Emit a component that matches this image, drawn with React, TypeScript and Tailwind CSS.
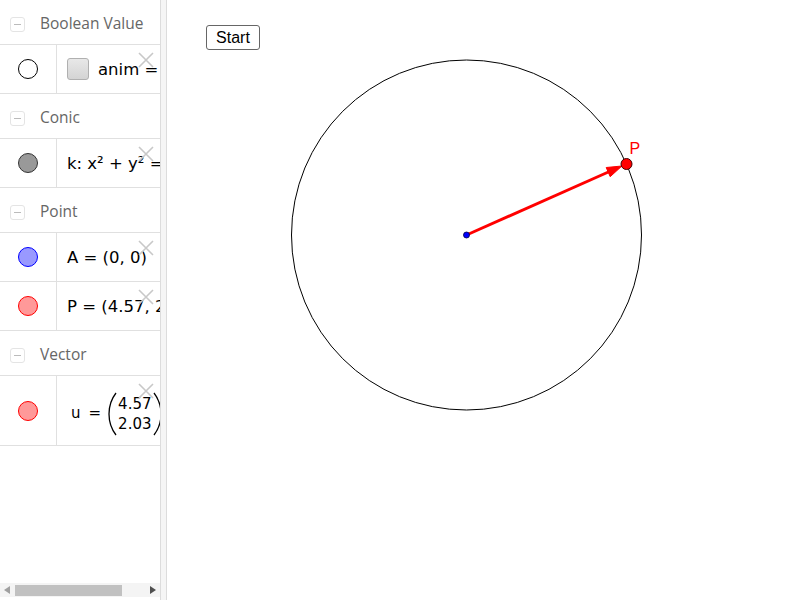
import type { ReactNode } from "react";

const MATH = { fontFamily: '"DejaVu Sans", sans-serif' };

function Header({ label }: { label: string }) {
  return (
    <div className="flex h-[45px] shrink-0 items-center border-b border-[#e0e0e0] pl-[10px] pt-[4px]">
      <div className="flex h-[15px] w-[15px] items-center justify-center rounded-[3px] border border-[#e4e4e4]">
        <div className="h-[1px] w-[7px] bg-[#bbb]" />
      </div>
      <span className="ml-[15px] text-[15.5px] text-[#666]" style={{ fontFamily: '"Open Sans", sans-serif' }}>
        {label}
      </span>
    </div>
  );
}

function CloseX() {
  return (
    <svg viewBox="0 0 16 16" className="absolute right-[6px] top-[7px] h-[16px] w-[16px]" stroke="#c8c8c8" strokeWidth="1.6">
      <path d="M1 1L15 15M15 1L1 15" />
    </svg>
  );
}

function Paren({ flip }: { flip?: boolean }) {
  return (
    <svg viewBox="0 0 10 44" className="h-[44px] w-[10px] shrink-0" fill="none" stroke="#000" strokeWidth="1.3">
      <path d={flip ? "M2 1Q9 10 9 22Q9 34 2 43" : "M8 1Q1 10 1 22Q1 34 8 43"} />
    </svg>
  );
}

function Item({ dot, height = 49, children }: { dot: string; height?: number; children: ReactNode }) {
  return (
    <div className="flex shrink-0 border-b border-[#e0e0e0]" style={{ height }}>
      <div className="flex w-[57px] shrink-0 items-center justify-center border-r border-[#e0e0e0]">
        <div className={`h-[20px] w-[20px] rounded-full border ${dot}`} />
      </div>
      <div className="relative flex min-w-0 flex-1 items-center overflow-hidden whitespace-nowrap pl-[10px] pt-[3px] text-[16.5px] text-black" style={MATH}>
        {children}
        <CloseX />
      </div>
    </div>
  );
}

export default function App() {
  return (
    <div className="flex h-[600px] w-[800px] overflow-hidden bg-white">
      <div className="relative flex w-[160px] shrink-0 flex-col overflow-hidden">
        <Header label="Boolean Value" />
        <Item dot="border-black bg-white">
          <div className="-mt-[3px] h-[22px] w-[22px] shrink-0 rounded-[3px] border border-[#b0b0b0] bg-gradient-to-b from-[#e8e8e8] to-[#d4d4d4]" />
          <span className="ml-[9px]">anim =</span>
        </Item>
        <Header label="Conic" />
        <Item dot="border-[#333] bg-[#999]">
          <span>k: x² + y² = 25</span>
        </Item>
        <Header label="Point" />
        <Item dot="border-[#0000ff] bg-[#9999ff]">
          <span>A = (0, 0)</span>
        </Item>
        <Item dot="border-[#ff0000] bg-[#ff9999]">
          <span>P = (4.57, 2.03)</span>
        </Item>
        <Header label="Vector" />
        <Item dot="border-[#ff0000] bg-[#ff9999]" height={70}>
          <div className="ml-[4px] mt-[3px] flex items-center text-[15px]">
            <span>u</span>
            <span className="ml-[8px]">=</span>
            <span className="ml-[7px]">
              <Paren />
            </span>
            <div className="flex flex-col text-[15px] leading-[20px]">
              <span>4.57</span>
              <span>2.03</span>
            </div>
            <Paren flip />
          </div>
        </Item>
        <div className="flex-1" />
        <div className="mb-[3px] flex h-[14px] items-center bg-[#f4f4f4] px-[4px]">
          <svg viewBox="0 0 6 8" className="h-[8px] w-[6px]" fill="#a0a0a0">
            <path d="M6 0L0 4L6 8Z" />
          </svg>
          <div className="ml-[5px] h-[11px] w-[107px] bg-[#c1c1c1]" />
          <div className="flex-1" />
          <svg viewBox="0 0 6 8" className="h-[8px] w-[6px]" fill="#505050">
            <path d="M0 0L6 4L0 8Z" />
          </svg>
        </div>
      </div>
      <div className="w-[7px] shrink-0 border-x border-[#dcdcdc] bg-[#f5f5f5]" />
      <div className="relative flex-1">
        <button
          className="absolute left-[39px] top-[25px] h-[25px] w-[54px] rounded-[3px] border border-[#666] bg-white text-[16px] text-black"
          style={{ fontFamily: '"Liberation Sans", sans-serif' }}
        >
          Start
        </button>
        <svg viewBox="168 0 632 600" className="h-full w-full">
          <circle cx="467" cy="235" r="175" fill="none" stroke="#000" strokeWidth="1" />
          <line x1="467" y1="235" x2="610" y2="171.5" stroke="#ff0000" strokeWidth="3" />
          <path d="M622.4 166 L610.7 176.7 L606.7 167.5 Z" fill="#ff0000" stroke="#ff0000" strokeWidth="1" />
          <circle cx="467" cy="235" r="3" fill="#0000ff" stroke="#000044" strokeWidth="0.8" />
          <circle cx="627" cy="164" r="5.5" fill="#ff0000" stroke="#440000" strokeWidth="1" />
          <text x="630" y="154" fill="#ff0000" fontSize="16" fontFamily="Liberation Sans, sans-serif">
            P
          </text>
        </svg>
      </div>
    </div>
  );
}
